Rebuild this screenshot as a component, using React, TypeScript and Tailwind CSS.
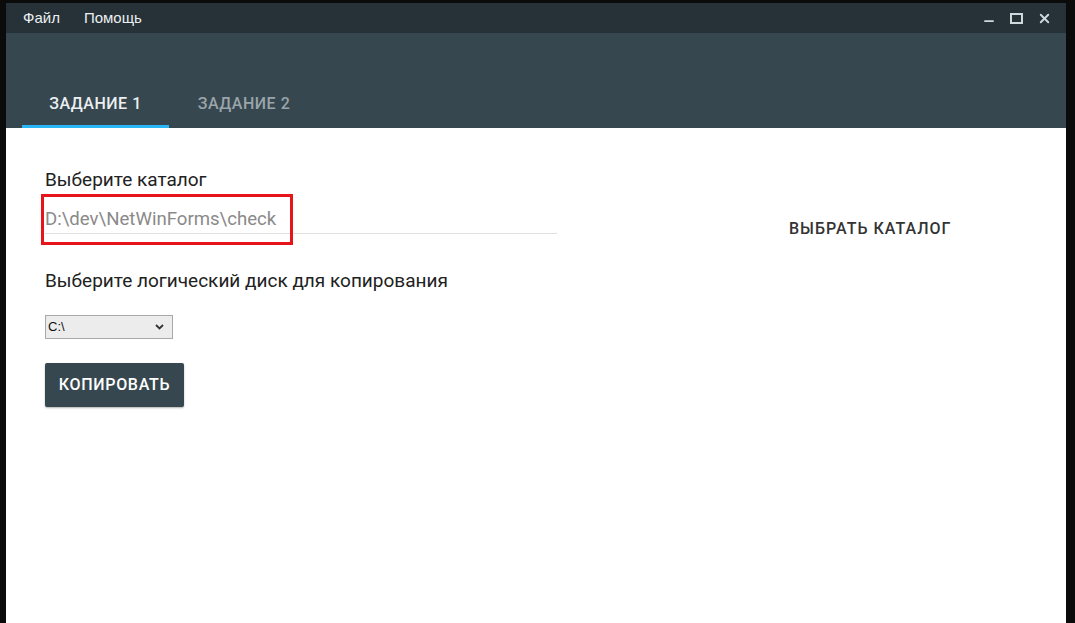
import { Minus, X } from "lucide-react";

export default function App() {
  return (
    <div
      className="w-[1075px] h-[623px] bg-[#0b0b0b] pt-[3px] pl-[6px] pr-[9px] overflow-hidden"
      style={{ fontFamily: "Roboto, 'Noto Sans', sans-serif" }}
    >
      <div className="w-full h-full bg-white flex flex-col">
        {/* title bar */}
        <div className="h-[30px] bg-[#263238] flex items-center pl-[17px] pr-[14px] text-[15px] text-[#eceff1]" style={{ fontFamily: "'Liberation Sans', Arial, sans-serif" }}>
          <span>Файл</span>
          <span className="ml-[24px]">Помощь</span>
          <div className="ml-auto flex items-center gap-[14px] text-[#cfd8dc]">
            <Minus className="w-[14px] h-[14px] mt-[6px]" strokeWidth={3} />
            <div className="w-[13px] h-[11px] border-2 border-[#cfd8dc]" />
            <X className="w-[15px] h-[15px]" strokeWidth={3} />
          </div>
        </div>
        {/* header + tabs */}
        <div className="h-[95px] bg-[#37474f] flex items-end pl-[16px]">
          <div className="w-[147px] h-[46px] flex items-center justify-center border-b-[3px] border-[#29b6f6] text-[16px] font-medium tracking-[0.5px] text-[#eceff1]">
            ЗАДАНИЕ 1
          </div>
          <div className="w-[150px] h-[46px] flex items-center justify-center border-b-[3px] border-transparent text-[16px] font-medium tracking-[0.5px] text-[#9aa5ab]">
            ЗАДАНИЕ 2
          </div>
        </div>
        {/* body */}
        <div className="flex-1 pl-[39px] pt-[39px] text-[#212121]">
          <div className="flex items-start">
            <div className="w-[512px]">
              <div className="text-[19px] leading-[26px]">Выберите каталог</div>
              <div className="relative h-[41px] border-b border-[#e0e0e0] flex items-end pb-[1px]">
                <span className="text-[18.6px] leading-[26px] text-[#8a8a8a]">D:\dev\NetWinForms\check</span>
                <div className="absolute left-[-4px] top-[1px] w-[252px] h-[51px] border-[3px] border-[#e8141c]" />
              </div>
            </div>
            <div className="ml-[232px] mt-[50px] text-[16px] leading-[24px] font-medium tracking-[1px] text-[#333]">
              ВЫБРАТЬ КАТАЛОГ
            </div>
          </div>
          <div className="mt-[27px] text-[19px] leading-[26px]">Выберите логический диск для копирования</div>
          <div className="mt-[21px] w-[128px] h-[24px] border border-[#a9a9a9] bg-[#ececec] flex items-center justify-between pl-[2px] pr-[8px] text-[13px] text-[#111]" style={{ fontFamily: "'Liberation Sans', Arial, sans-serif" }}>
            <span>C:\</span>
            <svg width="9" height="6" viewBox="0 0 9 6">
              <path d="M1 1 L4.5 4.5 L8 1" stroke="#333" strokeWidth="1.8" fill="none" />
            </svg>
          </div>
          <button className="mt-[24px] w-[139px] h-[44px] bg-[#37474f] rounded-[2px] shadow-[0_1px_2px_rgba(0,0,0,0.3)] text-white text-[16px] font-medium tracking-[0.7px]">
            КОПИРОВАТЬ
          </button>
        </div>
      </div>
    </div>
  );
}
